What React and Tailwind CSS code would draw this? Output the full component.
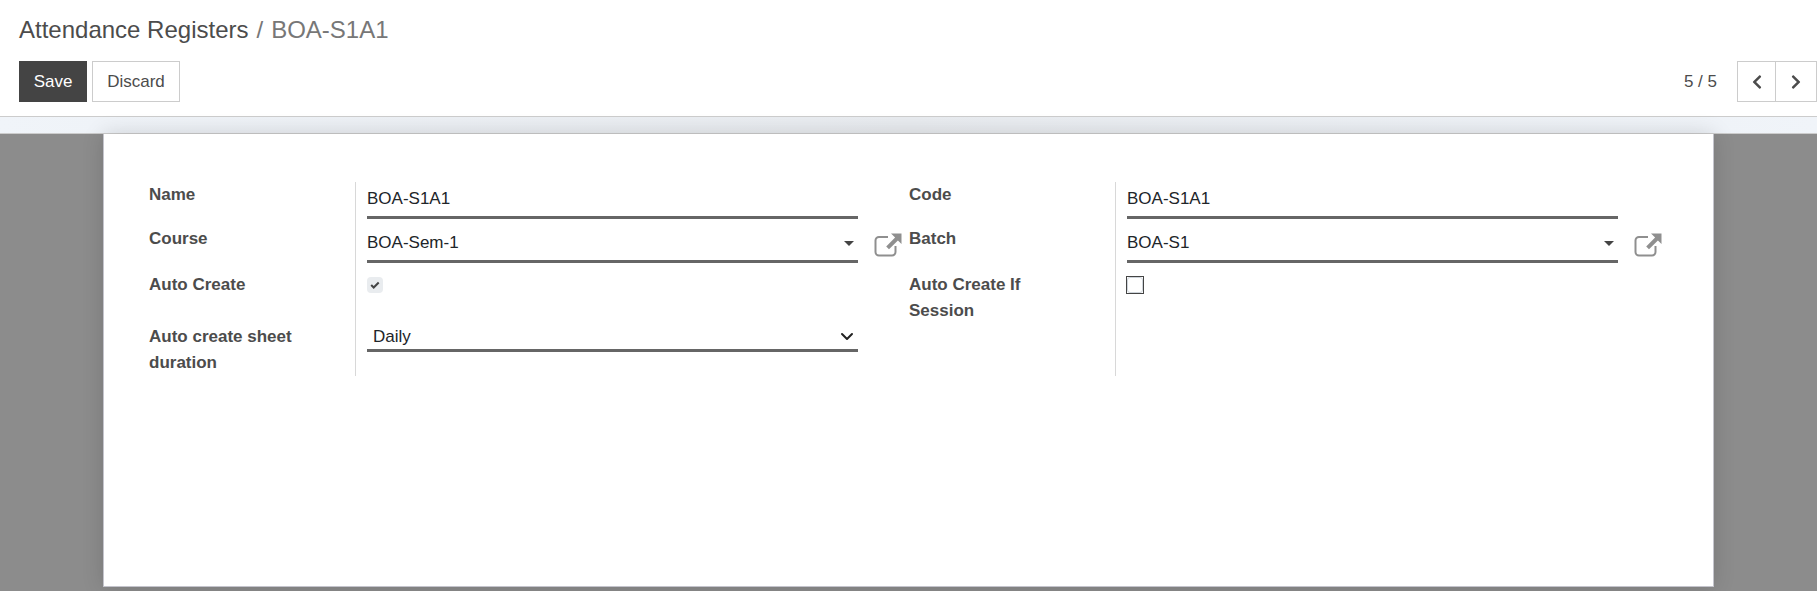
import React from 'react';
import { FaChevronLeft, FaChevronRight } from 'react-icons/fa';

// odoo-style external link icon
function ExternalLink() {
    return (
        <svg width="28" height="24" viewBox="0 0 28 24" fill="none" className="shrink-0 text-[#8f8f8f]">
            <path d="M14 4H5a3.5 3.5 0 0 0-3.500 3.500V19A3.500 3.500 0 0 0 5 22.500h13a3.500 3.500 0 0 0 3.500-3.500v-6" stroke="currentColor" strokeWidth="2" />
            <path d="M17 0.500h10.500V11l-3.600-3.600-8.900 8.900-2.800-2.800 8.900-8.900z" fill="currentColor" />
        </svg>
    );
}

function Caret() {
    return <span className="w-0 h-0 border-x-[5.500px] border-x-transparent border-t-[5px] border-t-[#444]"></span>;
}

function Chevron() {
    return (
        <svg width="14" height="9" viewBox="0 0 14 9" fill="none" className="text-[#222]">
            <path d="M2 2l5 5 5-5" stroke="currentColor" strokeWidth="2" strokeLinecap="round" strokeLinejoin="round" />
        </svg>
    );
}

function Field({ value, height, right, pad }) {
    return (
        <div className={`w-[491px] flex items-center justify-between border-b-[3px] border-[#666] text-[#212529] pr-[4px] ${height} ${pad || ''}`}>
            <span>{value}</span>
            {right}
        </div>
    );
}

function Label({ children, className }) {
    return <div className={`font-bold text-[#4c4c4c] leading-[26px] ${className}`}>{children}</div>;
}

function Group({ labels, children }) {
    return (
        <div className="flex w-[760px]">
            <div className="w-[207px] shrink-0 border-r border-[#d8d8d8] h-[194px]">{labels}</div>
            <div className="pl-[11px]">{children}</div>
        </div>
    );
}

export default function App() {
    return (
        <div className="w-[1817px] h-[591px] overflow-hidden bg-white text-[17px] font-['Liberation_Sans',Arial,sans-serif]">
            <div className="h-[117px] border-b border-[#ccc] pl-[19px]">
                <div className="pt-[15px] h-[61px] text-[24px] leading-[30px] text-[#4c4c4c]">
                    Attendance Registers
                    <span className="text-[#777] ml-[8px]">/</span>
                    <span className="text-[#777] ml-[8px]">BOA-S1A1</span>
                </div>
                <div className="flex items-center">
                    <button className="h-[41px] w-[68px] bg-[#444] text-white">Save</button>
                    <button className="h-[41px] w-[88px] ml-[5px] border border-[#ccc] text-[#4c4c4c]">Discard</button>
                    <span className="ml-auto mr-[20px] text-[#4c4c4c]">5 / 5</span>
                    <div className="flex border border-[#ccc] h-[41px]">
                        <button className="w-[38px] flex items-center justify-center text-[#4c4c4c] border-r border-[#ccc]"><FaChevronLeft size={16} /></button>
                        <button className="w-[40px] flex items-center justify-center text-[#4c4c4c]"><FaChevronRight size={16} /></button>
                    </div>
                </div>
            </div>
            <div className="h-[17px] border-b border-[#ccc] bg-gradient-to-r from-[#f0f4f9] via-[#e8ebef] to-[#f0f4f9]"></div>
            <div className="h-[457px] bg-[#8c8c8c] px-[103px]">
                <div className="h-[453px] bg-white border-x border-b border-[#c4c4cc] shadow-[0_0_20px_rgba(0,0,0,0.15)] pl-[45px] pt-[48px] flex">
                    <Group
                        labels={
                            <>
                                <Label className="h-[44px]">Name</Label>
                                <Label className="h-[46px]">Course</Label>
                                <Label className="h-[52px]">Auto Create</Label>
                                <Label className="w-[170px]">Auto create sheet duration</Label>
                            </>
                        }
                    >
                        <Field value="BOA-S1A1" height="h-[37px]" />
                        <div className="flex items-center mt-[7px]">
                            <Field value="BOA-Sem-1" height="h-[37px]" right={<Caret />} />
                            <div className="ml-[16px]"><ExternalLink /></div>
                        </div>
                        <div className="mt-[14px] w-[16px] h-[16px] rounded-[4px] bg-[#e9ecef] flex items-center justify-center">
                            <svg width="10" height="8" viewBox="0 0 10 8" fill="none">
                                <path d="M1.200 4l2.500 2.500 5-5" stroke="#444" strokeWidth="2" />
                            </svg>
                        </div>
                        <div className="mt-[31px]">
                            <Field value="Daily" height="h-[28px]" pad="pl-[6px]" right={<Chevron />} />
                        </div>
                    </Group>
                    <Group
                        labels={
                            <>
                                <Label className="h-[44px]">Code</Label>
                                <Label className="h-[46px]">Batch</Label>
                                <Label className="w-[150px]">Auto Create If Session</Label>
                            </>
                        }
                    >
                        <Field value="BOA-S1A1" height="h-[37px]" />
                        <div className="flex items-center mt-[7px]">
                            <Field value="BOA-S1" height="h-[37px]" right={<Caret />} />
                            <div className="ml-[16px]"><ExternalLink /></div>
                        </div>
                        <div className="mt-[13px] -ml-[1px] w-[18px] h-[18px] border border-[#444] bg-white">
                            <div className="w-full h-full rounded-[3px] border border-[#ced4da]"></div>
                        </div>
                    </Group>
                </div>
            </div>
        </div>
    );
}
